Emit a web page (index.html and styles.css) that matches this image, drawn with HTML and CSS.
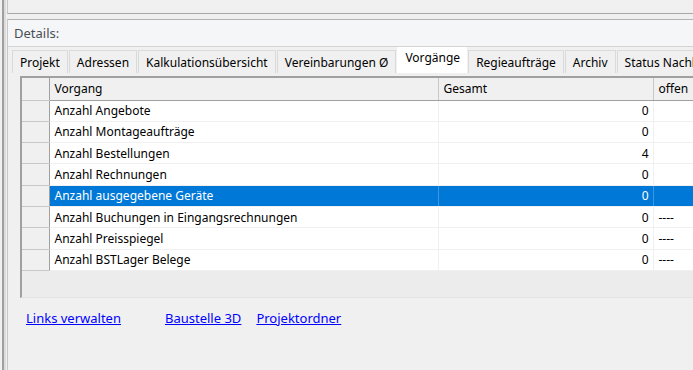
FILE: index.html
```html
<!DOCTYPE html>
<html>
<head>
    <title>Vorgänge</title>
    <link rel="stylesheet" href="styles.css">
</head>
<body>
    <div class="frame">
        <div class="edge"></div>
        <div class="main">
            <div class="toppanel"></div>
            <div class="details">
                <div class="caption">Details:</div>
                <div class="tabs">
                    <div class="tab">Projekt</div>
                    <div class="tab">Adressen</div>
                    <div class="tab">Kalkulationsübersicht</div>
                    <div class="tab">Vereinbarungen Ø</div>
                    <div class="tab active">Vorgänge</div>
                    <div class="tab">Regieaufträge</div>
                    <div class="tab">Archiv</div>
                    <div class="tab">Status Nachkalkulation</div>
                </div>
                <div class="page">
                    <div class="grid">
                        <table class="tbl">
                            <colgroup>
                                <col class="c-rh">
                                <col class="c-name">
                                <col class="c-sum">
                                <col class="c-open">
                            </colgroup>
                            <thead>
                                <tr>
                                    <th class="rh"></th>
                                    <th>Vorgang</th>
                                    <th>Gesamt</th>
                                    <th>offen</th>
                                </tr>
                            </thead>
                            <tbody>
                                <tr><td class="rh"></td><td>Anzahl Angebote</td><td class="num">0</td><td></td></tr>
                                <tr><td class="rh"></td><td>Anzahl Montageaufträge</td><td class="num">0</td><td></td></tr>
                                <tr><td class="rh"></td><td>Anzahl Bestellungen</td><td class="num">4</td><td></td></tr>
                                <tr><td class="rh"></td><td>Anzahl Rechnungen</td><td class="num">0</td><td></td></tr>
                                <tr class="sel"><td class="rh"></td><td>Anzahl ausgegebene Geräte</td><td class="num">0</td><td></td></tr>
                                <tr><td class="rh"></td><td>Anzahl Buchungen in Eingangsrechnungen</td><td class="num">0</td><td>----</td></tr>
                                <tr><td class="rh"></td><td>Anzahl Preisspiegel</td><td class="num">0</td><td>----</td></tr>
                                <tr><td class="rh"></td><td>Anzahl BSTLager Belege</td><td class="num">0</td><td>----</td></tr>
                            </tbody>
                        </table>
                    </div>
                    <div class="links">
                        <a href="#" class="lnk first">Links verwalten</a>
                        <a href="#" class="lnk">Baustelle 3D</a>
                        <a href="#" class="lnk">Projektordner</a>
                    </div>
                </div>
            </div>
        </div>
    </div>
</body>
</html>
```

FILE: styles.css
```css
* {
    margin: 0;
    padding: 0;
    box-sizing: border-box;
}

body {
    background-color: #f0f0f0;
    font-family: "Noto Sans", "Liberation Sans", sans-serif;
    font-size: 12px;
    color: #000;
    overflow: hidden;
}

.frame {
    display: flex;
    height: 370px;
}

.edge {
    width: 7px;
    flex: none;
    border-left: 2px solid #f0f0f0;
    background: linear-gradient(to right, #a0a0a0 0, #a0a0a0 2px, #dcdcdc 2px, #dcdcdc 4px, #f0f0f0 4px);
}

.main {
    flex: 1;
    display: flex;
    flex-direction: column;
    min-width: 0;
}

.toppanel {
    height: 14px;
    border-bottom: 1px solid #a8a8a8;
    border-left: 1px solid #c8c8c8;
}

.details {
    margin-top: 5px;
    flex: 1;
    border-top: 1px solid #b4b4b4;
    border-left: 1px solid #c8c8c8;
}

.caption {
    height: 27px;
    padding: 4px 0 0 6px;
    color: #4a4f55;
    font-size: 13px;
    background-color: #f5f6f7;
    border-bottom: 1px solid #d4d4d4;
}

.tabs {
    display: flex;
    align-items: flex-end;
    height: 26px;
    padding-left: 4px;
    white-space: nowrap;
    overflow: hidden;
}

.tab {
    height: 23px;
    padding: 3px 7px 0;
    border: 1px solid #dadada;
    border-bottom: none;
    margin-right: 1px;
    background-color: #f0f0f0;
    flex: none;
}

.tab.active {
    height: 26px;
    padding: 1px 6px 0 7px;
    background-color: #fff;
    border-color: #fff;
    position: relative;
    z-index: 1;
}

.page {
    padding: 3px 0 0 12px;
}

.grid {
    width: 700px;
    height: 222px;
    border-top: 2px solid #a0a0a0;
    border-left: 2px solid #a0a0a0;
    border-bottom: 1px solid #e4e4e4;
    background-color: #ececec;
}

.tbl {
    border-collapse: collapse;
    table-layout: fixed;
    width: 698px;
}

.c-rh {
    width: 27px;
}

.c-name {
    width: 389px;
}

.c-sum {
    width: 215px;
}

.tbl th,
.tbl td {
    height: 21.3px;
    padding: 0 4px 0 5px;
    text-align: left;
    font-weight: normal;
    white-space: nowrap;
    overflow: hidden;
    background-color: #fff;
    border-right: 1px solid #f0f0f0;
    border-bottom: 1px solid #f0f0f0;
}

.tbl th {
    height: 22px;
    background-color: #f0f0f0;
    border-right: 1px solid #c8c8c8;
    border-bottom: 1px solid #a0a0a0;
}

.tbl .rh {
    background-color: #f0f0f0;
    border-right: 1px solid #a0a0a0;
    border-bottom: 1px solid #c8c8c8;
}

.tbl td.num {
    text-align: right;
}

.tbl tr.sel td {
    background-color: #0078d7;
    color: #fff;
    border-right-color: #3c96e0;
}

.tbl tr.sel td.rh {
    background-color: #f0f0f0;
    border-right-color: #a0a0a0;
}

.links {
    display: flex;
    padding: 11px 0 0 6px;
    font-size: 13px;
}

.lnk {
    color: #0000ff;
    margin-right: 15px;
}

.lnk.first {
    margin-right: 44px;
}
```
